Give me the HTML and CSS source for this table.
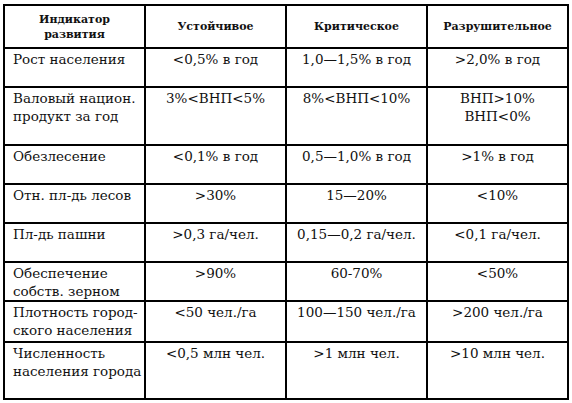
FILE: index.html
```html
<!DOCTYPE html>
<html lang="ru">
<head>
<meta charset="utf-8">
<link rel="stylesheet" href="styles.css">
</head>
<body>
<table class="grid">
  <colgroup>
    <col class="c1"><col class="c2"><col class="c3"><col class="c4">
  </colgroup>
  <thead>
    <tr class="head">
      <th>Индикатор<br>развития</th>
      <th>Устойчивое</th>
      <th>Критическое</th>
      <th>Разрушительное</th>
    </tr>
  </thead>
  <tbody>
    <tr class="r39">
      <td class="name">Рост населения</td>
      <td>&lt;0,5% в год</td>
      <td>1,0—1,5% в год</td>
      <td>&gt;2,0% в год</td>
    </tr>
    <tr class="r58">
      <td class="name">Валовый национ.<br>продукт за год</td>
      <td>3%&lt;ВНП&lt;5%</td>
      <td>8%&lt;ВНП&lt;10%</td>
      <td>ВНП&gt;10%<br>ВНП&lt;0%</td>
    </tr>
    <tr class="r39">
      <td class="name">Обезлесение</td>
      <td>&lt;0,1% в год</td>
      <td>0,5—1,0% в год</td>
      <td>&gt;1% в год</td>
    </tr>
    <tr class="r39">
      <td class="name">Отн. пл-дь лесов</td>
      <td>&gt;30%</td>
      <td>15—20%</td>
      <td>&lt;10%</td>
    </tr>
    <tr class="r39">
      <td class="name">Пл-дь пашни</td>
      <td>&gt;0,3 га/чел.</td>
      <td>0,15—0,2 га/чел.</td>
      <td>&lt;0,1 га/чел.</td>
    </tr>
    <tr class="r37">
      <td class="name">Обеспечение<br>собств. зерном</td>
      <td>&gt;90%</td>
      <td>60-70%</td>
      <td>&lt;50%</td>
    </tr>
    <tr class="r41">
      <td class="name">Плотность город-<br>ского населения</td>
      <td>&lt;50 чел./га</td>
      <td>100—150 чел./га</td>
      <td>&gt;200 чел./га</td>
    </tr>
    <tr class="r57">
      <td class="name">Численность<br>населения города</td>
      <td>&lt;0,5 млн чел.</td>
      <td>&gt;1 млн чел.</td>
      <td>&gt;10 млн чел.</td>
    </tr>
  </tbody>
</table>
</body>
</html>
```
FILE: styles.css
```css
html, body {
  margin: 0;
  padding: 0;
  background: #ffffff;
}
body {
  padding: 4px 0 0 3px;
  font-family: "DejaVu Serif", "Liberation Serif", serif;
  color: #111;
}
.grid {
  border-collapse: collapse;
  table-layout: fixed;
  width: 565px;
}
.c1 { width: 141px; }
.c2 { width: 141px; }
.c3 { width: 141px; }
.c4 { width: 141px; }
.grid th,
.grid td {
  border: 2px solid #000;
  padding: 0;
}
.grid th {
  font-size: 11px;
  font-weight: bold;
  line-height: 15px;
  text-align: center;
  vertical-align: middle;
}
.head { height: 43px; }
.grid td {
  font-size: 13.5px;
  line-height: 18px;
  text-align: center;
  vertical-align: top;
  padding-top: 1px;
}
.grid td.name {
  text-align: left;
  padding-left: 8px;
}
.r39 { height: 39px; }
.r58 { height: 58px; }
.r37 { height: 37px; }
.r41 { height: 41px; }
.r57 { height: 57px; }
```
